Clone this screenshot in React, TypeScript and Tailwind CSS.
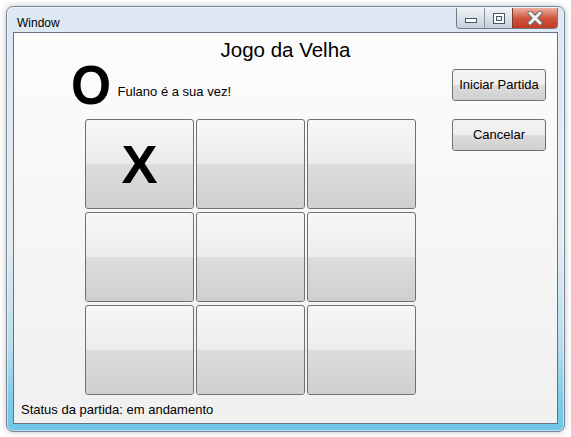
const cells = ["X", "", "", "", "", "", "", "", ""];

function CellButton({ mark }: { mark: string }) {
  return (
    <button className="relative flex items-center justify-center overflow-hidden rounded-[3px] border border-[#707070] bg-linear-to-b from-[#f7f7f7] from-0% via-[#ececec] via-50% to-[#cfcfcf] to-100%">
      <span className="absolute inset-x-0 bottom-0 h-1/2 bg-linear-to-b from-[#dddddd] to-[#cfcfcf]" />
      <span className="relative text-[54px] leading-none font-bold text-black">{mark}</span>
    </button>
  );
}

function SideButton({ label }: { label: string }) {
  return (
    <button className="relative h-[32px] w-[94px] overflow-hidden rounded-[3px] border border-[#707070] bg-linear-to-b from-[#f3f3f3] to-[#e9e9e9] text-[13px] text-black">
      <span className="absolute inset-x-0 bottom-0 h-1/2 bg-linear-to-b from-[#dddddd] to-[#cfcfcf]" />
      <span className="relative">{label}</span>
    </button>
  );
}

function CaptionButtons() {
  return (
    <div className="flex h-[21px] overflow-hidden rounded-b-[4px] border border-t-0 border-[#6f7b89]">
      <div className="flex w-[28px] items-end justify-center border-r border-[#8a95a3] bg-linear-to-b from-[#f0f4f8] to-[#c6d0dc] pb-[5px]">
        <svg width="12" height="6" viewBox="0 0 12 6">
          <rect x="0.5" y="1.5" width="11" height="4" fill="#fff" stroke="#4b5563" />
        </svg>
      </div>
      <div className="flex w-[28px] items-center justify-center border-r border-[#7a3a2e] bg-linear-to-b from-[#f0f4f8] to-[#c6d0dc]">
        <svg width="12" height="11" viewBox="0 0 12 11">
          <rect x="0.5" y="0.5" width="11" height="10" fill="#fff" stroke="#4b5563" />
          <rect x="3.5" y="3.5" width="5" height="4" fill="#e8edf2" stroke="#4b5563" />
        </svg>
      </div>
      <div className="flex w-[44px] items-center justify-center bg-linear-to-b from-[#eab0a0] via-[#d0563e] to-[#c23a22]">
        <svg width="16" height="14" viewBox="0 0 16 14">
          <path d="M3 2 L13 12 M13 2 L3 12" stroke="#6a6a6a" strokeWidth="5" strokeLinecap="round" />
          <path d="M3 2 L13 12 M13 2 L3 12" stroke="#f2f2f2" strokeWidth="3" strokeLinecap="round" />
        </svg>
      </div>
    </div>
  );
}

export default function App() {
  return (
    <div className="h-[437px] w-[571px] bg-white pt-[6px] pl-[6px] font-['Liberation_Sans',Arial,sans-serif]">
      <div className="flex h-[426px] w-[559px] flex-col rounded-[7px] border border-[#7a8593] bg-[linear-gradient(to_bottom,#dde8f3_0%,#e4ecf2_55%,#b9dcec_80%,#7ccbe9_93%,#6ec6e7_100%)] px-[6px] pb-[7px] shadow-[0_0_6px_rgba(0,0,0,0.25),inset_0_0_0_1px_rgba(255,255,255,0.5)]">
        <div className="flex h-[25px] items-start justify-between">
          <span className="pt-[9px] pl-[4px] text-[12px] leading-[14px] text-black">Window</span>
          <div className="pt-[1px]">
            <CaptionButtons />
          </div>
        </div>

        <div className="flex flex-1 flex-col border border-[#66727f] bg-linear-to-b from-[#fcfcfc] to-[#f0f0f0]">
          <h1 className="pt-[5px] text-center text-[20.5px] leading-[24px] text-black">Jogo da Velha</h1>

          <div className="flex items-start justify-between">
            <div className="ml-[57px] flex flex-col">
              <div className="mt-[1px] flex items-start">
                <span className="inline-block origin-left scale-x-[0.92] text-[56px] leading-[44px] font-bold text-black">O</span>
                <span className="mt-[21px] ml-[3px] text-[13px] leading-[15px] text-black">Fulano é a sua vez!</span>
              </div>
              <div className="mt-[12px] ml-[14px] grid grid-cols-[109px_109px_109px] grid-rows-[90px_90px_90px] gap-x-[2px] gap-y-[3px]">
                {cells.map((c, i) => (
                  <CellButton key={i} mark={c} />
                ))}
              </div>
            </div>

            <div className="mt-[7px] mr-[11px] flex flex-col gap-[18px]">
              <SideButton label="Iniciar Partida" />
              <SideButton label="Cancelar" />
            </div>
          </div>

          <div className="mt-auto pb-[6px] pl-[7px] text-[13px] leading-[15px] text-black">Status da partida: em andamento</div>
        </div>
      </div>
    </div>
  );
}
